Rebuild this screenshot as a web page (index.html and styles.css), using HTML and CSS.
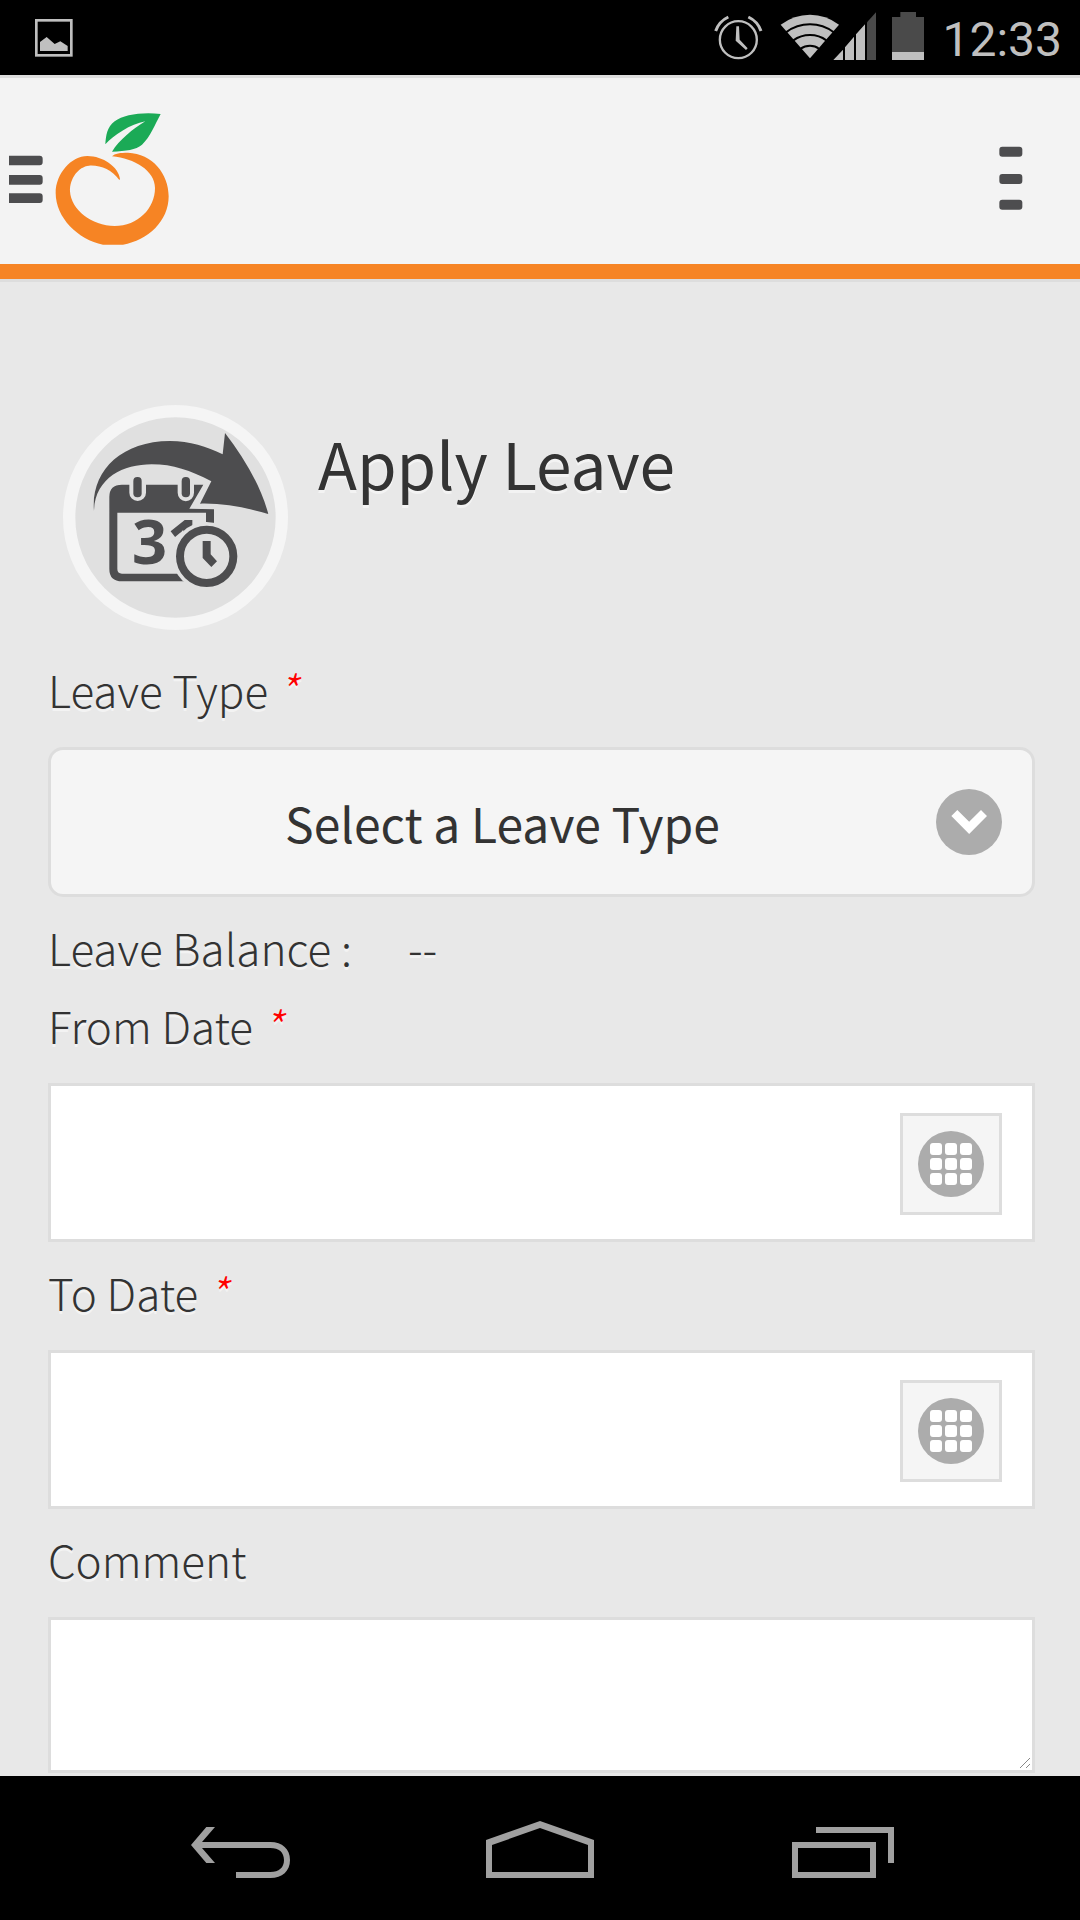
FILE: index.html
```html
<!DOCTYPE html>
<html lang="en">
<head>
<meta charset="utf-8">
<meta name="viewport" content="width=device-width, initial-scale=1">
<title>Apply Leave</title>
<link rel="stylesheet" href="styles.css">
</head>
<body>
<div class="status-bar">
  <svg class="status-picture" viewBox="105 57 114 114" role="img" aria-label="Screenshot saved"><rect x="109" y="61" width="105" height="105" fill="none" stroke="#bfbfbf" stroke-width="8"/><path fill="#bfbfbf" d="M120 153V126L140 111L164 132L181 124L203 138V153Z"/></svg>
  <div class="status-icons">
    <svg width="50" height="48" viewBox="72 36 150 144" role="img" aria-label="Alarm"><g fill="none" stroke="#bfbfbf"><circle cx="145" cy="119" r="55.500" stroke-width="7"/><path stroke-width="9" d="M77 93Q87 64 115 51M175 51Q203 64 213 93"/></g><path fill="#bfbfbf" d="M139 79H147L149 119L173 145L168 150L137 122Z"/></svg>
    <svg width="96" height="48" viewBox="270 36 288 144" role="img" aria-label="Wi-Fi and mobile signal"><path fill="#bfbfbf" d="M272 74Q312 44 360 44T447 74L360 175Z"/><g fill="none" stroke="#000" stroke-width="6"><path d="M288 97Q320 73 360 73T431 97"/><path d="M310 121Q332 105 360 105T409 121"/><path d="M332 146Q344 137 360 137T387 146"/></g><path fill="#bfbfbf" d="M430 180L459 149V180ZM465 180V142L492 110V180ZM498 180V103L525 73V180Z"/><path fill="#4a4a4a" d="M531 180V67L558 37V180Z"/></svg>
    <svg width="32" height="48" viewBox="606 36 96 144" role="img" aria-label="Battery low"><path fill="#4a4a4a" d="M631 36H678V51H702V156H606V51H631Z"/><path fill="#bfbfbf" d="M606 156H702V180H606Z"/></svg>
    <time class="clock">12:33</time>
  </div>
</div>

<header class="app-bar">
  <div class="brand">
    <button class="icon-button" type="button" aria-label="Open menu"><svg width="34" height="48" viewBox="27 465 102 144" fill="#4d4d4f"><path d="M27 467H119Q128 467 128 476V487Q128 496 119 496H27ZM27 525H119Q128 525 128 534V545Q128 554 119 554H27ZM27 580H119Q128 580 128 589V600Q128 609 119 609H27Z"/></svg></button>
    <a class="logo" href="#" aria-label="Home"><svg width="114" height="132" viewBox="166 338 342 396"><path fill="#1baa56" d="M483 341C425 335 372 343 345 363C322 380 319 405 317 432C342 405 392 371 437 363C400 385 358 420 337 454C380 451 408 449 427 433C452 410 465 374 483 341Z"/><path fill="#f68424" d="M359 539C335 508 304 494 268 496C236 499 210 534 211 573C214 628 276 677 345 677C415 677 466 624 466 563C466 512 405 474 337 468C345 459 362 457 385 457C458 460 507 520 507 588C507 662 445 721 370 733L310 733C235 718 168 652 168 578C168 520 215 467 263 467C310 467 357 500 361 536Z"/></svg></a>
  </div>
  <button class="icon-button" type="button" aria-label="More options"><svg width="24" height="66" viewBox="926 441 72 198" fill="#4d4d4f"><rect x="927" y="443" width="69" height="30" rx="9"/><rect x="927" y="525" width="69" height="30" rx="9"/><rect x="927" y="602" width="69" height="30" rx="9"/></svg></button>
</header>

<main class="content">
  <div class="page-head">
    <svg class="page-icon" viewBox="69 44 675 675" aria-hidden="true">
      <circle cx="406.500" cy="381.500" r="319" fill="#e0e0e0" stroke="#f5f5f5" stroke-width="37"/>
      <g fill="#4d4d4f">
        <path d="M246 283H490L448 355L522 357V402H498V367H232V536Q232 550 246 550H445V573H246Q208 573 208 536V320Q208 283 246 283Z"/>
        <text class="icon-day" x="276" y="520">31</text>
        <path d="M162 362C152 245 240 153 390 152C450 153 500 168 548 192L555 128C610 200 660 280 685 371C620 352 550 338 480 340L514 273C450 240 400 222 335 222C250 222 165 262 162 362Z"/>
      </g>
      <path fill="#e0e0e0" d="M268 280H318V307A25 25 0 0 1 268 307ZM413 280H462V307A24 25 0 0 1 413 307Z"/>
      <g fill="#4d4d4f"><rect x="280" y="260" width="25" height="61" rx="12"/><rect x="425" y="260" width="25" height="61" rx="12"/></g>
      <circle cx="500" cy="498" r="103" fill="#e0e0e0"/>
      <circle cx="500" cy="498" r="80" fill="none" stroke="#4d4d4f" stroke-width="24"/>
      <path fill="#4d4d4f" d="M488 452H512V492L531 513L514 530L488 503Z"/>
    </svg>
    <h1 class="page-title">Apply Leave</h1>
  </div>

  <form class="leave-form">
    <label class="label label-boxed" for="leave-type">Leave Type <em class="required">*</em></label>
    <div class="select-box">
      <select class="select" id="leave-type"><option>Select a Leave Type</option></select>
      <svg class="select-arrow" width="66" height="66" viewBox="768 177 198 198" aria-hidden="true"><circle cx="867" cy="276" r="99" fill="#acacac"/><path fill="#fff" d="M814 258L832 240L867.500 275L903 240L921 258L867.500 312Z"/></svg>
    </div>

    <div class="label balance"><span>Leave Balance :</span><output>--</output></div>

    <label class="label label-boxed" for="from-date">From Date <em class="required">*</em></label>
    <div class="date-box">
      <input class="date-input" id="from-date" type="text">
      <button class="date-button" type="button" aria-label="Pick from date"><svg width="66" height="66" viewBox="0 0 66 66"><circle cx="33" cy="33" r="33" fill="#acacac"/><g fill="#fff"><rect x="12" y="12" width="12" height="12" rx="3"/><rect x="27" y="12" width="12" height="12" rx="3"/><rect x="42" y="12" width="12" height="12" rx="3"/><rect x="12" y="27" width="12" height="12" rx="3"/><rect x="27" y="27" width="12" height="12" rx="3"/><rect x="42" y="27" width="12" height="12" rx="3"/><rect x="12" y="42" width="12" height="12" rx="3"/><rect x="27" y="42" width="12" height="12" rx="3"/><rect x="42" y="42" width="12" height="12" rx="3"/></g></svg></button>
    </div>

    <label class="label label-after-box label-boxed" for="to-date">To Date <em class="required">*</em></label>
    <div class="date-box">
      <input class="date-input" id="to-date" type="text">
      <button class="date-button" type="button" aria-label="Pick to date"><svg width="66" height="66" viewBox="0 0 66 66"><circle cx="33" cy="33" r="33" fill="#acacac"/><g fill="#fff"><rect x="12" y="12" width="12" height="12" rx="3"/><rect x="27" y="12" width="12" height="12" rx="3"/><rect x="42" y="12" width="12" height="12" rx="3"/><rect x="12" y="27" width="12" height="12" rx="3"/><rect x="27" y="27" width="12" height="12" rx="3"/><rect x="42" y="27" width="12" height="12" rx="3"/><rect x="12" y="42" width="12" height="12" rx="3"/><rect x="27" y="42" width="12" height="12" rx="3"/><rect x="42" y="42" width="12" height="12" rx="3"/></g></svg></button>
    </div>

    <label class="label label-after-box label-boxed" for="comment">Comment</label>
    <textarea class="comment" id="comment"></textarea>
  </form>
</main>

<nav class="nav-bar" aria-label="System">
  <button class="nav-button" type="button" aria-label="Back"><svg width="99" height="60" viewBox="120 204 297 180" fill="#a0a0a0"><path d="M120 285L166 231H192L153 276H358C394 276 417 297 417 330S394 384 358 384H255V366H358C384 366 399 353 399 330S384 294 358 294H153L192 339H166Z"/></svg></button>
  <button class="nav-button" type="button" aria-label="Home"><svg width="108" height="60" viewBox="1008 204 324 180"><path fill="#a0a0a0" fill-rule="evenodd" d="M1008 270L1170 213L1332 270V384H1008ZM1026 285V366H1314V285L1170 234Z"/></svg></button>
  <button class="nav-button" type="button" aria-label="Recent apps"><svg width="108" height="60" viewBox="108 234 324 180"><path fill="#a0a0a0" fill-rule="evenodd" d="M126 306H378V414H126ZM144 324V396H360V324ZM198 261H432V369H414V279H198Z"/></svg></button>
</nav>
</body>
</html>
```

FILE: styles.css
```css
* {
  box-sizing: border-box;
}

body {
  display: flex;
  flex-direction: column;
  min-height: 100vh;
  margin: 0;
  background: #e8e8e8;
  color: #333;
  font-family: "Noto Sans CJK SC", "Noto Sans", sans-serif;
}

svg {
  display: block;
  flex: none;
}

button {
  padding: 0;
  border: 0;
  background: none;
}

/* Status bar */
.status-bar {
  display: flex;
  justify-content: space-between;
  height: 75px;
  padding: 0 18px 0 35px;
  background: #000;
}

.status-picture {
  width: 38px;
  height: 38px;
  margin-top: 19px;
}

.status-icons {
  display: flex;
  gap: 16px;
  align-items: center;
  height: 72px;
}

.clock {
  padding: 8px 0 0 2px;
  color: #bfbfbf;
  font: 48px/72px Roboto, sans-serif;
}

/* App bar */
.app-bar {
  display: flex;
  justify-content: space-between;
  align-items: center;
  height: 207px;
  padding: 0 57px 0 9px;
  border-top: 3px solid #ddd;
  border-bottom: 3px solid #ddd;
  background: #f3f3f3;
  box-shadow: inset 0 -15px #f68424;
}

.brand {
  display: flex;
  align-items: center;
  gap: 12px;
}

/* Page */
.content {
  flex: 1;
  padding: 123px 45px 3px 48px;
}

.page-head {
  display: flex;
  gap: 30px;
  padding-left: 15px;
}

.page-icon {
  width: 225px;
  height: 225px;
}

.icon-day {
  font-family: "Open Sans", "Noto Sans", sans-serif;
  font-size: 184px;
  font-weight: 700;
}

.page-title {
  margin: 5px 0 0;
  font-size: 64px;
  font-weight: 400;
  line-height: 104px;
  text-shadow: 0 3px 0 #f3f3f3;
}

.leave-form {
  padding-top: 20px;
}

.label {
  display: block;
  font-size: 44px;
  font-weight: 200;
  line-height: 78px;
  text-shadow: 0 3px 0 #f3f3f3;
}

.label-boxed {
  margin-bottom: 19px;
}

.label-after-box {
  margin-top: 11px;
}

.balance {
  display: flex;
  gap: 56px;
  margin-top: 11px;
}

.required {
  color: #f00;
}

.select-box {
  display: grid;
  align-items: center;
}

.select,
.select-arrow {
  grid-area: 1 / 1;
}

.select {
  width: 100%;
  height: 150px;
  padding: 0 96px 0 18px;
  border: 3px solid #ddd;
  border-radius: 15px;
  background: #f5f5f5;
  color: #333;
  font-family: inherit;
  font-size: 48px;
  text-align-last: center;
  appearance: none;
}

.select-arrow {
  justify-self: end;
  margin-right: 33px;
  pointer-events: none;
}

.date-box {
  display: flex;
  align-items: flex-start;
  height: 159px;
  padding: 27px 30px 0 0;
  border: 3px solid #ddd;
  background: #fff;
}

.date-input {
  flex: 1;
  min-width: 0;
  height: 102px;
  padding: 0 18px;
  border: 0;
  background: none;
  font: inherit;
  font-size: 44px;
}

.date-button {
  display: grid;
  place-items: center;
  width: 102px;
  height: 102px;
  border: 3px solid #ddd;
  background: #f5f5f5;
}

.comment {
  display: block;
  width: 100%;
  height: 156px;
  padding: 12px 18px;
  border: 3px solid #ddd;
  background: #fff;
  font: inherit;
  font-size: 44px;
}

.comment::-webkit-resizer {
  background: url("data:image/svg+xml,%3Csvg xmlns='http://www.w3.org/2000/svg' width='15' height='15'%3E%3Cpath d='M3 13L13 3M9 13L13 9' stroke='%23888' stroke-width='1'/%3E%3C/svg%3E") no-repeat;
}

/* System navigation */
.nav-bar {
  display: grid;
  grid-template-columns: repeat(3, 1fr);
  height: 144px;
  padding: 0 90px;
  background: #000;
}

.nav-button {
  display: grid;
  place-items: center;
}
```
